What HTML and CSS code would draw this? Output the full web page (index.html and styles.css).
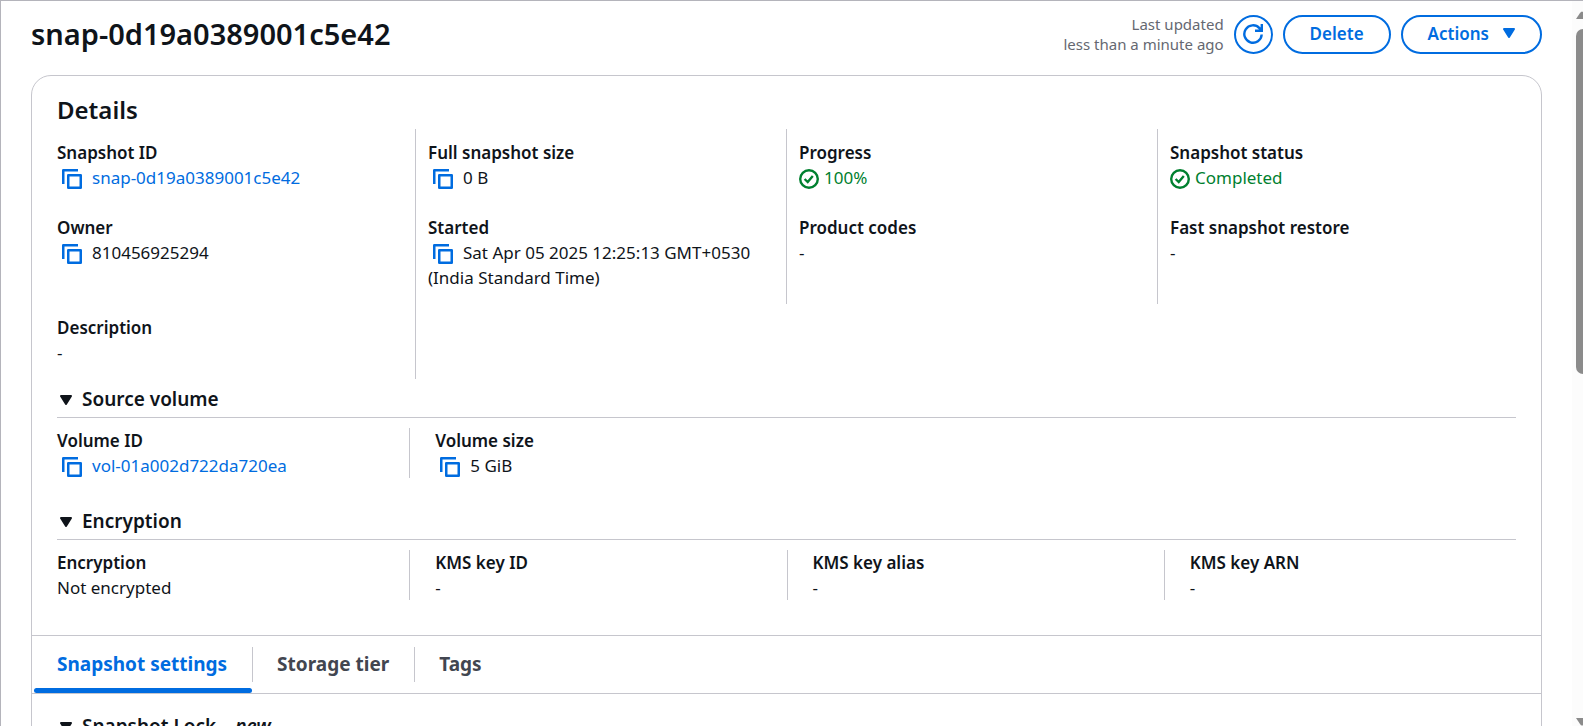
FILE: index.html
```
<!DOCTYPE html>
<html lang="en">
<head>
<meta charset="utf-8">
<title>snap-0d19a0389001c5e42</title>
<link rel="stylesheet" href="styles.css">
</head>
<body>
<svg class="sprite" aria-hidden="true">
  <symbol id="copy" viewBox="0 0 20 20"><path d="M1.25 15V1.25H16M6.25 6.25h12.5v12.5H6.25z" fill="none" stroke="currentColor" stroke-width="2.5" stroke-linejoin="round"/></symbol>
  <symbol id="check" viewBox="0 0 20 20"><circle cx="10" cy="10" r="8.8" fill="none" stroke="currentColor" stroke-width="2.4"/><path d="M5.6 10l3.1 3 5.1-6" fill="none" stroke="currentColor" stroke-width="2.4"/></symbol>
  <symbol id="caret" viewBox="0 0 12 10"><path d="M1 1h10L6 9z" fill="currentColor" stroke="currentColor" stroke-width="2" stroke-linejoin="round"/></symbol>
  <symbol id="refresh" viewBox="0 0 20 20"><path d="M18.7 10.500a8.700 8.700 0 1 1-2.300-6.400L18.700 6.700M18.800 0v6.800H12" fill="none" stroke="currentColor" stroke-width="2.400"/></symbol>
</svg>
<div class="app">
  <main class="page">
    <header class="page-header">
      <h1 class="title">snap-0d19a0389001c5e42</h1>
      <p class="updated">Last updated<br>less than a minute ago</p>
      <button class="btn btn-icon" type="button" aria-label="Refresh"><svg class="icon"><use href="#refresh"/></svg></button>
      <button class="btn" type="button">Delete</button>
      <button class="btn btn-menu" type="button">Actions <svg class="caret"><use href="#caret"/></svg></button>
    </header>
    <section class="card">
      <div class="card-body">
        <h2 class="card-title">Details</h2>
        <dl class="details">
          <div class="cell"><dt>Snapshot ID</dt><dd><button class="copy" type="button" aria-label="Copy snapshot ID"><svg class="icon"><use href="#copy"/></svg></button><a href="#snapshot">snap-0d19a0389001c5e42</a></dd></div>
          <div class="cell"><dt>Full snapshot size</dt><dd><button class="copy" type="button" aria-label="Copy size"><svg class="icon"><use href="#copy"/></svg></button>0 B</dd></div>
          <div class="cell"><dt>Progress</dt><dd class="ok"><svg class="icon status"><use href="#check"/></svg>100%</dd></div>
          <div class="cell"><dt>Snapshot status</dt><dd class="ok"><svg class="icon status"><use href="#check"/></svg>Completed</dd></div>
          <div class="cell"><dt>Owner</dt><dd><button class="copy" type="button" aria-label="Copy owner"><svg class="icon"><use href="#copy"/></svg></button>810456925294</dd></div>
          <div class="cell"><dt>Started</dt><dd><button class="copy" type="button" aria-label="Copy start time"><svg class="icon"><use href="#copy"/></svg></button>Sat Apr 05 2025 12:25:13 GMT+0530 (India Standard Time)</dd></div>
          <div class="cell"><dt>Product codes</dt><dd>-</dd></div>
          <div class="cell"><dt>Fast snapshot restore</dt><dd>-</dd></div>
          <div class="cell"><dt>Description</dt><dd>-</dd></div>
        </dl>
        <section class="group">
          <h3 class="group-title"><button class="toggle" type="button" aria-expanded="true"><svg class="caret"><use href="#caret"/></svg>Source volume</button></h3>
          <dl class="pairs">
            <div class="pair"><dt>Volume ID</dt><dd><button class="copy" type="button" aria-label="Copy volume ID"><svg class="icon"><use href="#copy"/></svg></button><a href="#volume">vol-01a002d722da720ea</a></dd></div>
            <div class="pair"><dt>Volume size</dt><dd><button class="copy" type="button" aria-label="Copy volume size"><svg class="icon"><use href="#copy"/></svg></button>5 GiB</dd></div>
          </dl>
        </section>
        <section class="group">
          <h3 class="group-title"><button class="toggle" type="button" aria-expanded="true"><svg class="caret"><use href="#caret"/></svg>Encryption</button></h3>
          <dl class="pairs">
            <div class="pair"><dt>Encryption</dt><dd>Not encrypted</dd></div>
            <div class="pair"><dt>KMS key ID</dt><dd>-</dd></div>
            <div class="pair"><dt>KMS key alias</dt><dd>-</dd></div>
            <div class="pair"><dt>KMS key ARN</dt><dd>-</dd></div>
          </dl>
        </section>
      </div>
      <div class="tabs" role="tablist">
        <button class="tab active" type="button" role="tab" aria-selected="true">Snapshot settings</button>
        <button class="tab" type="button" role="tab" aria-selected="false">Storage tier</button>
        <button class="tab" type="button" role="tab" aria-selected="false">Tags</button>
      </div>
      <div class="panel" role="tabpanel">
        <h3 class="group-title"><button class="toggle" type="button" aria-expanded="true"><svg class="caret"><use href="#caret"/></svg>Snapshot Lock <em class="new">new</em></button></h3>
      </div>
    </section>
  </main>
  <div class="scrollbar" aria-hidden="true">
    <svg class="scroll-arrow" viewBox="0 0 14 9"><path d="M1 8l4-6q2-3 4 0l4 6z"/></svg>
    <div class="thumb"></div>
    <svg class="scroll-arrow down" viewBox="0 0 14 9"><path d="M1 1l4 6q2 3 4 0l4-6z"/></svg>
  </div>
</div>
</body>
</html>
```
FILE: styles.css
```
* { box-sizing: border-box; }

body {
  margin: 0;
  font: 17px/25px "Noto Sans", sans-serif;
  color: #0f141a;
  background: #fff;
}

h1, h2, h3, p, dl, dd { margin: 0; }
dt { font-weight: 600; }
a { color: #006ce0; text-decoration: none; }
button { font: inherit; color: inherit; background: none; border: 0; padding: 0; cursor: pointer; }

.sprite { display: none; }
.icon { display: block; width: 20px; height: 20px; overflow: visible; }
.caret { width: 12px; height: 10px; }

.app {
  display: flex;
  height: 100vh;
  overflow: hidden;
  border-top: 1px solid #b4b4bb;
  border-left: 1px solid #b4b4bb;
}

.page { flex: 1; min-width: 0; padding: 13px 30px 0; }

.page-header { display: flex; align-items: center; gap: 10px; margin-bottom: 21px; }
.title { flex: 1; font-size: 29px; line-height: 38px; font-weight: 600; }
.updated { font-size: 15px; line-height: 20px; color: #656871; text-align: right; }

.btn {
  height: 39px;
  padding: 0 25px 2px;
  border: 2px solid #006ce0;
  border-radius: 20px;
  color: #006ce0;
  font-weight: 600;
}
.btn-icon { display: flex; align-items: center; justify-content: center; width: 39px; padding: 0; }
.btn-menu { display: flex; align-items: center; gap: 14px; }

.card { border: 1px solid #c6c6cd; border-radius: 20px; }
.card-body { padding: 19px 25px 35px; }
.card-title { font-size: 24px; line-height: 30px; font-weight: 600; margin-bottom: 4px; }

.details { display: grid; grid-template-columns: repeat(4, 1fr); margin: 0 -13px 0 -12px; }
.cell { padding: 11px 12px 14px; border-right: 1px solid #c6c6cd; }
.cell:nth-child(4n) { border-right: 0; }

.copy { display: inline-block; vertical-align: middle; margin: 0 10px 0 5px; color: #006ce0; }
.status { display: inline-block; vertical-align: middle; margin-right: 5px; }
.ok { color: #00802f; }

.group + .group { margin-top: 23px; }
.group-title { padding: 8px 0 5px; border-bottom: 1px solid #c6c6cd; font-size: 19px; line-height: 25px; font-weight: 600; }
.toggle { display: flex; align-items: center; gap: 10px; padding-left: 3px; }
.new { margin-left: 9px; }

.pairs { display: grid; grid-template-columns: repeat(4, 1fr); gap: 25px; margin: 10px 0 0 -25px; }
.pair { padding-left: 25px; border-left: 1px solid #c6c6cd; }
.pair:first-child { border-left: 0; }

.tabs { display: flex; border-top: 1px solid #c6c6cd; border-bottom: 1px solid #c6c6cd; }
.tab {
  position: relative;
  height: 57px;
  padding: 0 25px;
  font-size: 19px;
  font-weight: 700;
  color: #424650;
}
.tab + .tab::before {
  content: "";
  position: absolute;
  left: 0;
  top: 11px;
  bottom: 11px;
  width: 1px;
  background: #c6c6cd;
}
.tab.active { color: #006ce0; }
.tab.active::after {
  content: "";
  position: absolute;
  left: 2px;
  right: 0;
  bottom: 0;
  height: 5px;
  border-radius: 3px;
  background: #006ce0;
}

.panel { padding: 12px 25px 25px; }

.scrollbar { display: flex; flex-direction: column; width: 11px; padding-top: 10px; background: #fcfcfc; overflow: hidden; }
.scroll-arrow { width: 14px; height: 9px; margin-left: 3px; flex: none; fill: #8b8b8b; }
.thumb { height: calc(48% + 2px); margin: 9px 0 0 4px; border-radius: 7px 0 0 7px; background: #8b8b8b; }
.down { margin-top: auto; }
```
